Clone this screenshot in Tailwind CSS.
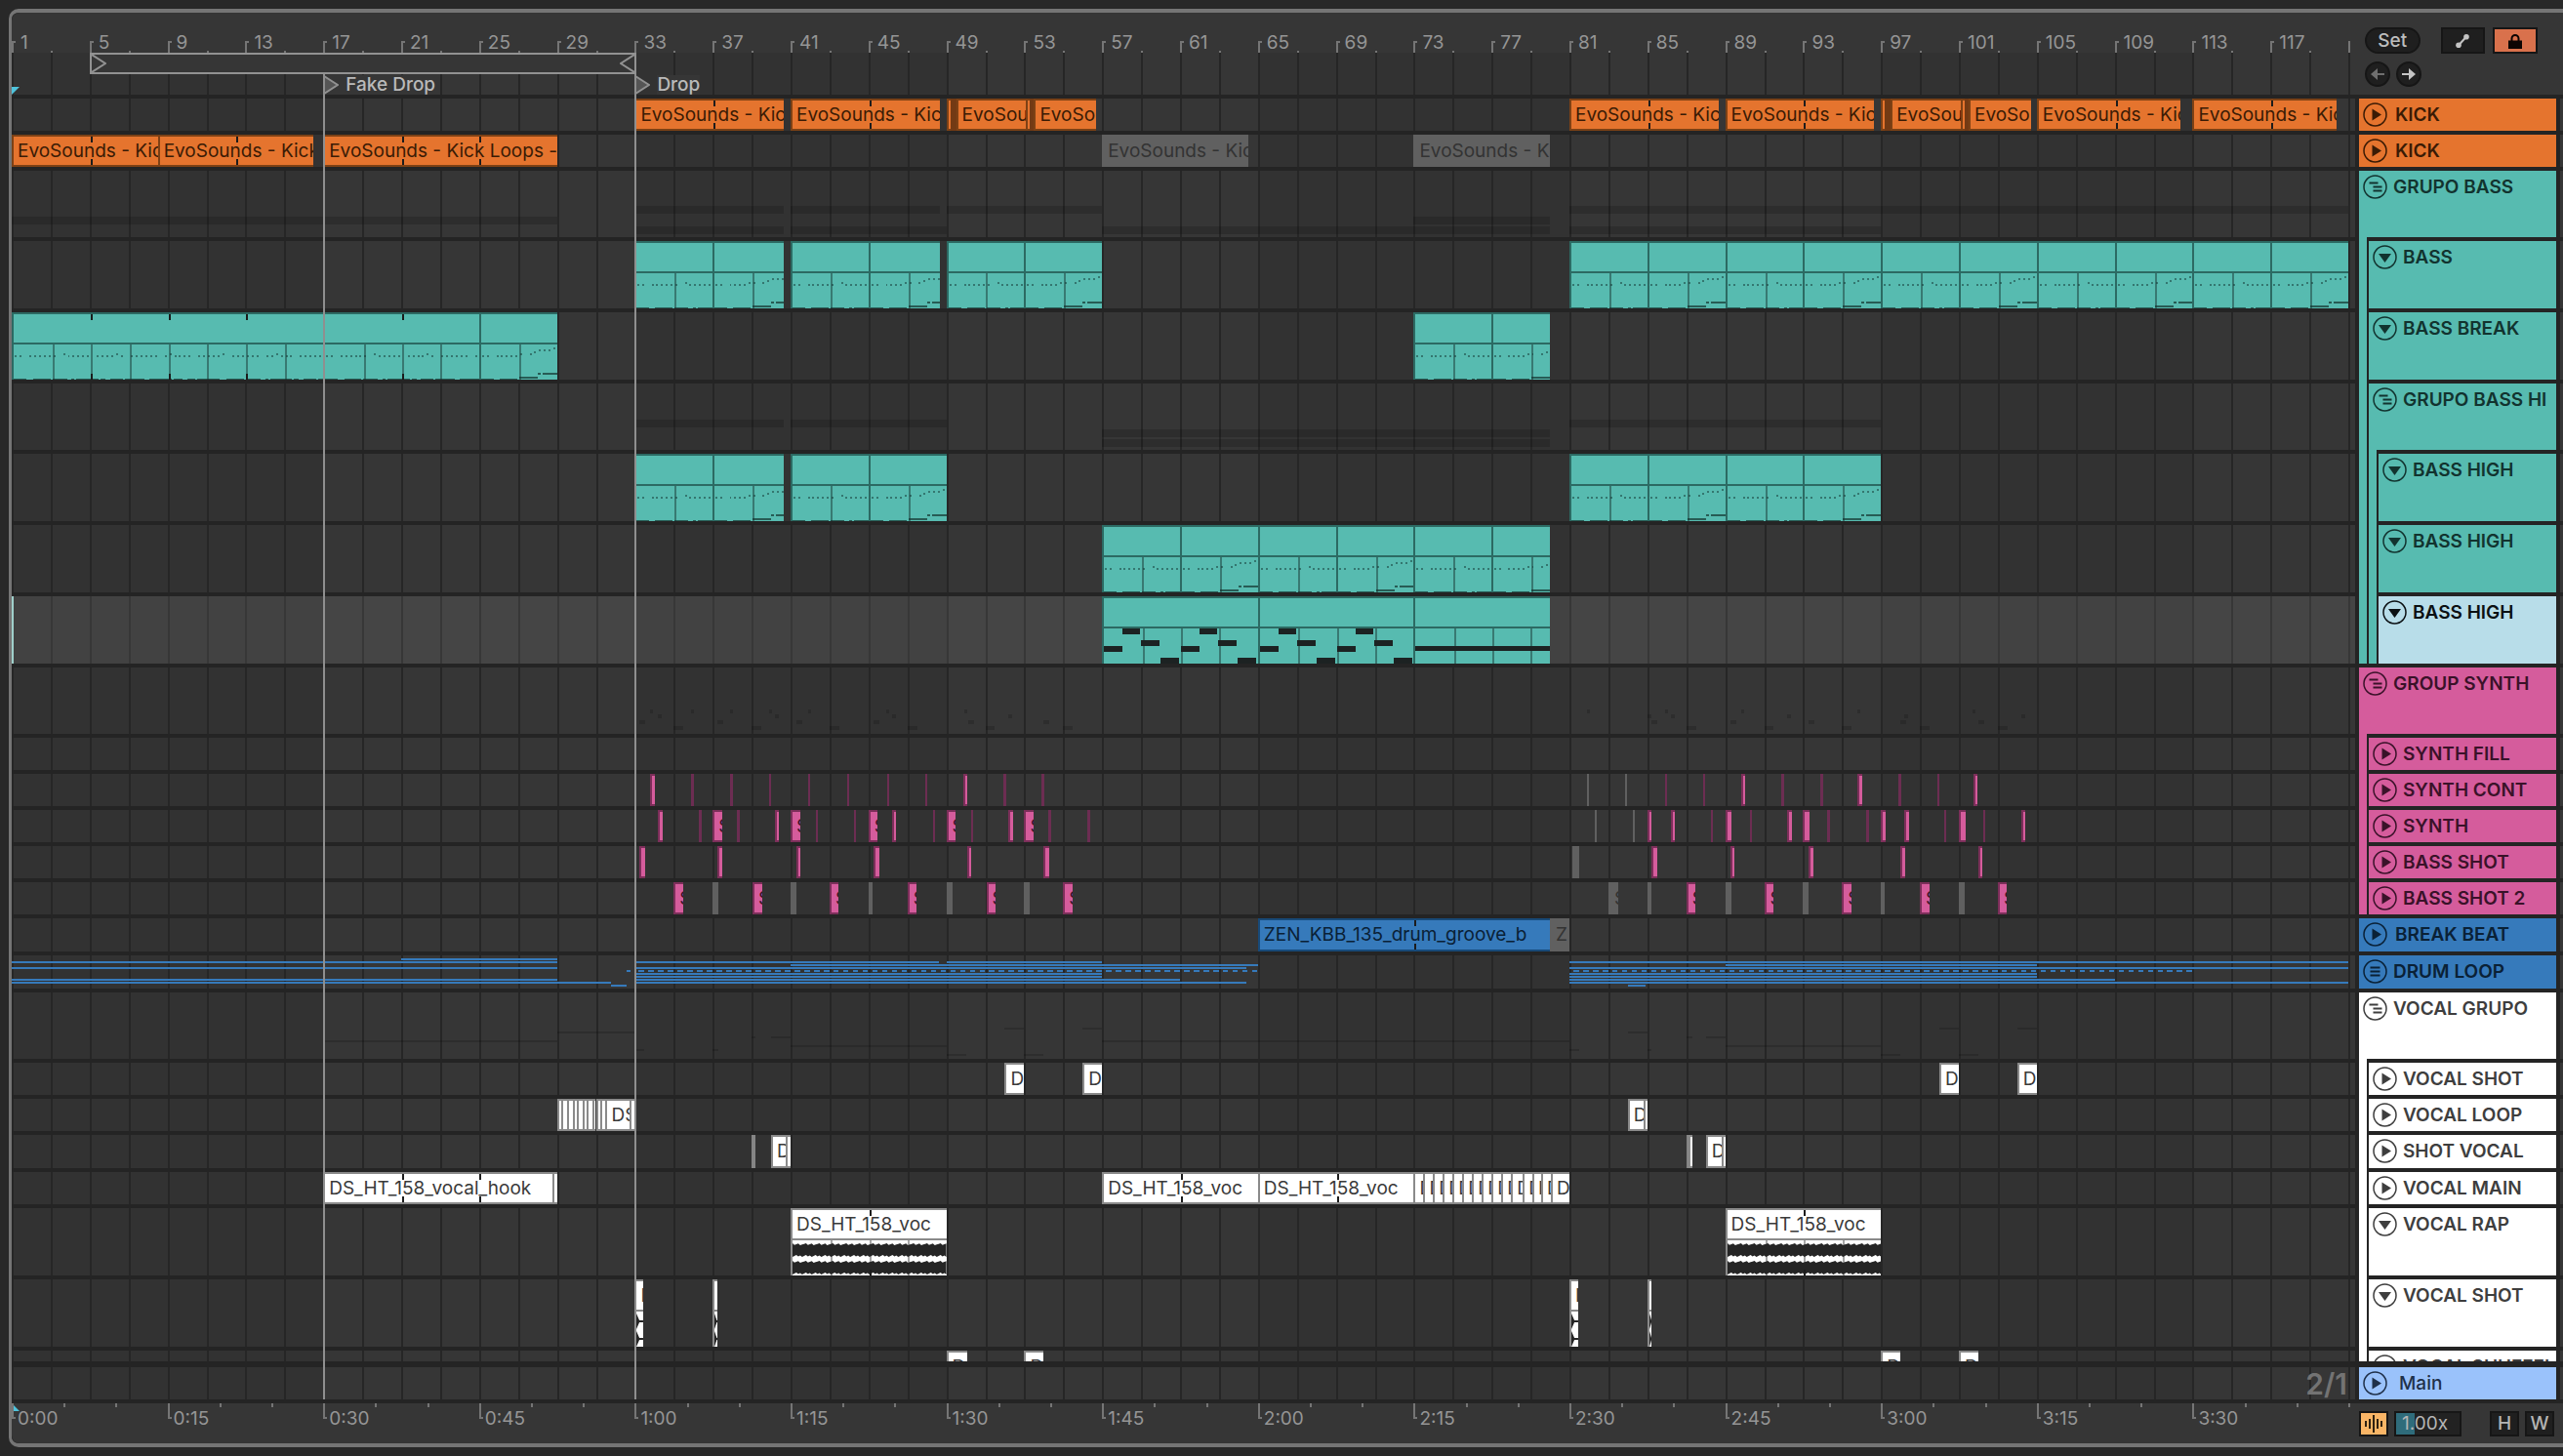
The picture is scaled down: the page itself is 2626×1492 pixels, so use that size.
<!DOCTYPE html>
<html lang="en">
 <head>
  <meta charset="utf-8"/>
  <title>Arrangement</title>
  <script src="https://cdn.jsdelivr.net/npm/@tailwindcss/browser@4"></script>
 </head>
 <body class="h-screen overflow-hidden bg-[#282828] py-[9px] pl-[9px] font-['Inter',sans-serif] text-[19px] leading-6">
  <main class="relative flex h-full flex-col rounded-l-[10px] border-y-4 border-l-[3px] border-[#757575] bg-[#242424]">

   <!-- bar grid behind everything -->
   <div class="absolute top-[41px] right-[213px] bottom-[45px] left-0 overflow-hidden bg-[#363636]" id="grid"></div>

   <header class="relative flex h-[84px] shrink-0">
    <div class="relative flex-1" id="ruler">
     <div class="absolute top-0 right-0 left-0 h-[41px] rounded-tl-lg bg-[#363636]"></div>
    </div>
    <div class="flex w-[213px] flex-col gap-2 bg-[#363636] pt-[15px] pl-[10px]">
     <div class="flex items-center pr-[26px]">
      <button class="h-[27px] w-[57px] rounded-full border-2 border-[#161616] bg-[#1f1f1f] leading-5 font-medium text-[#bdbdbd]">Set</button>
      <button aria-label="Automation mode" class="ml-[21px] flex h-[27px] w-[46px] items-center justify-center border-2 border-[#161616] bg-[#1f1f1f]">
       <svg class="size-4" viewBox="0 0 16 16"><path d="M4 12.500L12 3.500" stroke="#c4c4c4" stroke-width="2"/><circle cx="4" cy="12.300" fill="#c4c4c4" r="2.800"/><circle cx="12" cy="3.700" fill="#c4c4c4" r="2.800"/></svg>
      </button>
      <button aria-label="Lock envelopes" class="ml-2 flex h-[27px] w-[46px] items-center justify-center border-2 border-[#161616] bg-[#d9714c]">
       <svg class="size-4" viewBox="0 0 16 16"><path d="M4.500 8V5.500a3.500 3.500 0 0 1 7 0V8" fill="none" stroke="#0c0503" stroke-width="2"/><rect fill="#0c0503" height="8.500" width="14" x="1" y="7.500"/></svg>
      </button>
     </div>
     <div class="flex gap-[6px]">
      <button aria-label="Previous locator" class="flex size-[26px] items-center justify-center rounded-full border-2 border-[#161616] bg-[#1f1f1f]">
       <svg class="size-4" viewBox="0 0 16 16"><path d="M15 8H6" stroke="#6f6f6f" stroke-width="2"/><path d="M1 8L8 2v12z" fill="#6f6f6f"/></svg>
      </button>
      <button aria-label="Next locator" class="flex size-[26px] items-center justify-center rounded-full border-2 border-[#161616] bg-[#1f1f1f]">
       <svg class="size-4" viewBox="0 0 16 16"><path d="M1 8H10" stroke="#c4c4c4" stroke-width="2"/><path d="M15 8L8 2v12z" fill="#c4c4c4"/></svg>
      </button>
     </div>
    </div>
   </header>
   <div class="relative h-1 shrink-0 bg-[#242424]"></div>

   <section class="relative min-h-0 flex-1 overflow-hidden" id="tracks"></section>

   <div class="relative h-[6px] shrink-0 bg-[#242424]"></div>
   <div class="relative flex h-[33px] shrink-0">
    <div class="flex flex-1 items-center justify-end pr-2 text-3xl font-semibold text-[#737373]">2/1</div>
    <div class="w-1 bg-[#242424]"></div>
    <div class="flex w-[202px] items-center bg-[#9ac2fb] pl-1 text-[#1f3049]">
     <button aria-label="Play Main" class="size-[25px]">
      <svg class="size-full" fill="none" viewBox="0 0 25 25"><circle cx="12.500" cy="12.500" r="11.500" stroke="currentColor" stroke-width="1.500"/><path d="M9.500 6.500v12l9.500-6z" fill="currentColor"/></svg>
     </button>
     <span class="ml-3 font-medium">Main</span>
    </div>
    <div class="w-1 bg-[#242424]"></div>
    <div class="w-[3px] bg-[#363636]"></div>
   </div>
   <div class="relative h-1 shrink-0 bg-[#242424]"></div>

   <footer class="relative flex h-[41px] shrink-0 rounded-bl-lg bg-[#363636]">
    <div class="relative flex-1 overflow-hidden" id="timeline"></div>
    <div class="flex w-[213px] items-center pr-[9px] pl-1 text-[#b5b5b5]">
     <button aria-label="Follow" class="flex h-[26px] w-[30px] items-center justify-center border-2 border-[#161616] bg-[#f9b566]">
      <svg class="h-[18px] w-[20px]" viewBox="0 0 20 18"><path d="M2 6v6M6 4v10M10 0v18M14 4v10M18 6v6" stroke="#1a1208" stroke-width="1.800"/></svg>
     </button>
     <input aria-label="Zoom" class="ml-[6px] h-[26px] w-[69px] border-2 border-[#161616] bg-[linear-gradient(90deg,#2f6c7b_19px,#222222_19px)] pl-[6px] text-[#b5b5b5]" type="text" value="1.00x"/>
     <div class="flex flex-1 justify-end gap-[6px]">
      <button class="h-[26px] w-[30px] border-2 border-[#161616] bg-[#1f1f1f] leading-5 font-medium">H</button>
      <button class="h-[26px] w-[30px] border-2 border-[#161616] bg-[#1f1f1f] leading-5 font-medium">W</button>
     </div>
    </div>
   </footer>

   <!-- locator lines run over the clips -->
   <div class="pointer-events-none absolute top-[63px] right-[213px] bottom-[45px] left-0" id="locators"></div>
  </main>

  <script>
   const BARS = 120.35;
   const pct = bar => ((bar - 1) / BARS * 100) + '%';
   const len = bars => (bars / BARS * 100) + '%';

   const skins = {
     kick:  { head: 'bg-[#e5742e] text-[#3a1b05]', clip: 'bg-[#e5742e] border-[#7d4115] text-[#3a1b05]', solid: 'bg-[#733a14]' },
     teal:  { head: 'bg-[#57bbb0] text-[#12332f]', clip: 'bg-[#57bbb0] border-[#2c6a63] text-[#12332f]', solid: 'bg-[#2c6a63]' },
     sel:   { head: 'bg-[#b8dde9] text-[#0b1013]', clip: 'bg-[#57bbb0] border-[#2c6a63] text-[#12332f]', solid: 'bg-[#2c6a63]' },
     pink:  { head: 'bg-[#d55c9c] text-[#3a1229]', clip: 'bg-[#d55c9c] border-[#7c2f5a] text-[#3a1229]', solid: 'bg-[#6c2d52]' },
     blue:  { head: 'bg-[#367abb] text-[#0a2136]', clip: 'bg-[#367abb] border-[#174a79] text-[#0a2136]', solid: 'bg-[#174a79]' },
     white: { head: 'bg-white text-[#3e3e3e]', clip: 'bg-white border-[#8a8a8a] text-[#3a3a3a]', solid: 'bg-[#858585]' },
     off:   { clip: 'bg-[#606060] border-[#606060] text-[#333333]', solid: 'bg-[#606060]' }
   };

   const icons = {
     play: '<path d="M9.500 6.500v12l9.500-6z" fill="currentColor"/>',
     fold: '<path d="M6 9h13l-6.500 9z" fill="currentColor"/>',
     group: '<path d="M6.500 8.500h9M10.500 12.500h9M10.500 16.500h9" stroke="currentColor" stroke-width="2"/>',
     list: '<path d="M7.500 8.500h10M7.500 12.500h10M7.500 16.500h10" stroke="currentColor" stroke-width="2"/>'
   };

   const EVO = 'EvoSounds - Kic';
   const DS = 'DS_HT_158_voc';
   const ZEN = 'ZEN_KBB_135_drum_groove_b';

   // clip: [start bar, end bar, label, flag]   flags: off = muted, solid = sliver
   const slivers = (list, flag) => list.map(b => [b, b + 0.12, '', flag || 'solid']);
   const shorts = (list, w) => list.map(b => [b, b + w, '']);
   const named = list => list.map(b => [b, b + 0.48, 'S']);
   const fours = (a, b) => {
     const out = [];
     for (let s = a; s < b; s += 4) out.push([s, Math.min(s + 4, b), '']);
     return out;
   };

   const cuts = [29, 29.2, 29.5, 29.8, 30, 30.3, 30.5, 30.8, 31, 31.25, 31.5];
   const loopCuts = cuts.slice(0, -1).map((b, i) => [b, cuts[i + 1], '']);
   const mainCuts = [];
   for (let b = 73; b < 78; b += 0.5) mainCuts.push([b, b + 0.5, 'D']);

   const tracks = [
     { name: 'KICK', size: 's', skin: 'kick', icon: 'play', tick: 4, clips: [[33, 40.65, EVO], [41, 48.65, EVO], [49, 49.2, ''], [49.2, 49.5, '', 'solid'], [49.5, 53.1, 'EvoSou'], [53.1, 53.3, ''], [53.3, 53.5, '', 'solid'], [53.5, 56.7, 'EvoSo'], [81, 88.65, EVO], [89, 96.65, EVO], [97, 97.2, ''], [97.2, 97.5, '', 'solid'], [97.5, 101.1, 'EvoSou'], [101.1, 101.3, ''], [101.3, 101.5, '', 'solid'], [101.5, 104.7, 'EvoSo'], [105, 112.4, EVO], [113, 120.4, EVO]] },
     { name: 'KICK', size: 's', skin: 'kick', icon: 'play', tick: 4, clips: [[1, 8.5, EVO], [8.5, 16.5, 'EvoSounds - Kick'], [17, 29, 'EvoSounds - Kick Loops -'], [57, 64.5, EVO, 'off'], [73, 80, 'EvoSounds - K', 'off']] },
     { name: 'GRUPO BASS', size: 'g', skin: 'teal', icon: 'group', strips: [], shade: [[1, 29, 47, 8], [33, 40.65, 36, 8], [33, 40.65, 57, 8], [41, 48.65, 36, 8], [41, 49, 57, 8], [49, 57, 36, 8], [57, 80, 57, 8], [73, 80, 47, 8], [81, 121, 36, 8], [81, 97, 57, 8]] },
     { name: 'BASS', size: 'b', skin: 'teal', icon: 'fold', strips: ['teal'], notes: 1, clips: [...fours(33, 40.67), ...fours(41, 48.67), ...fours(49, 57), ...fours(81, 121)] },
     { name: 'BASS BREAK', size: 'b', skin: 'teal', icon: 'fold', strips: ['teal'], notes: 1, riseFrom: 27, tick: 4, clips: [[1, 17, ''], [17, 25, ''], [25, 29, ''], ...fours(73, 80)] },
     { name: 'GRUPO BASS HI', size: 'g', skin: 'teal', icon: 'group', strips: ['teal'], shade: [[33, 40.65, 37, 8], [41, 49, 37, 8], [57, 80, 47, 8], [57, 80, 57, 8], [81, 97, 37, 8]] },
     { name: 'BASS HIGH', size: 'b', skin: 'teal', icon: 'fold', strips: ['teal', 'teal'], notes: 1, clips: [...fours(33, 40.67), ...fours(41, 49), ...fours(81, 97)] },
     { name: 'BASS HIGH', size: 'b', skin: 'teal', icon: 'fold', strips: ['teal', 'teal'], notes: 1, clips: fours(57, 80) },
     { name: 'BASS HIGH', size: 'b', skin: 'sel', icon: 'fold', strips: ['teal', 'teal'], last: 1, notes: 2, clips: [[57, 65, ''], [65, 73, ''], [73, 80, '']] },
     { name: 'GROUP SYNTH', size: 'g', skin: 'pink', icon: 'group', shade: [
       ...[33.8, 35.9, 37.9, 39.9, 41.9, 45.9, 49.9, 81.9, 85.9, 89.8, 95.8, 101.7].map(b => [b, b + 0.15, 43, 4]),
       ...[34.2, 40.2, 46.2, 52.2, 85, 86.2, 92.2, 98.2, 104.2].map(b => [b, b + 0.2, 48, 4]),
       ...[33.25, 37.25, 41.3, 45.25, 50.1, 54, 85.2, 89.25, 93.3, 98, 102].map(b => [b, b + 0.3, 54, 4]),
       ...[35, 39, 43, 47, 51, 55, 87, 91, 95, 99, 103].map(b => [b, b + 0.5, 60, 4])] },
     { name: 'SYNTH FILL', size: 's', skin: 'pink', icon: 'play', strips: ['pink'], clips: [] },
     { name: 'SYNTH CONT', size: 's', skin: 'pink', icon: 'play', strips: ['pink'], clips: [...shorts([33.8, 49.85, 89.8, 95.8, 101.75], 0.22), ...slivers([35.9, 37.9, 39.9, 41.9, 43.9, 45.95, 47.9, 51.95, 53.9, 85.9, 87.85, 91.9, 93.9, 97.9, 99.9]), ...slivers([81.9, 83.85], 'off')] },
     { name: 'SYNTH', size: 's', skin: 'pink', icon: 'play', strips: ['pink'], clips: [...shorts([34.2, 40.2, 46.2, 52.2, 85, 86.2, 92.2, 97, 98.2, 104.2], 0.22), ...shorts([89, 93, 101], 0.33), ...named([37, 41, 45, 49, 53]), ...slivers([36.3, 38.25, 42.3, 44.25, 48.3, 50.25, 54.25, 56.25, 88.25, 90.25, 94.25, 96.25, 100.25, 102.25]), ...slivers([82.3, 84.25], 'off')] },
     { name: 'BASS SHOT', size: 's', skin: 'pink', icon: 'play', strips: ['pink'], clips: [...shorts([33.25, 45.25, 54, 85.2], 0.3), ...shorts([37.25, 41.3, 50.05, 89.25, 93.3, 98, 102], 0.22), [81.15, 81.5, '', 'off']] },
     { name: 'BASS SHOT 2', size: 's', skin: 'pink', icon: 'play', strips: ['pink'], last: 1, clips: [...named([35, 39.05, 43, 47, 51.05, 55, 87, 91, 95, 99, 103]), ...[37, 41, 49, 53, 89, 93, 101].map(b => [b, b + 0.3, '', 'off']), ...[45, 85, 97].map(b => [b, b + 0.2, '', 'off']), [83, 83.5, 'S', 'off']] },
     { name: 'BREAK BEAT', size: 'm', skin: 'blue', icon: 'play', tick: 8, clips: [[65, 80, ZEN], [80, 81, 'Z', 'off']] },
     { name: 'DRUM LOOP', size: 'm', skin: 'blue', icon: 'list', drums: 1 },
     { name: 'VOCAL GRUPO', size: 'g', skin: 'white', icon: 'group', shade: [[17, 29, 49, 2], [29, 33, 40, 2], [33, 33.5, 58, 2], [37, 37.3, 58, 2], [39, 39.2, 45, 2], [40, 41, 45, 2], [41, 49, 54, 2], [49, 50, 63, 2], [53, 54, 63, 2], [52, 53, 36, 2], [56, 57, 36, 2], [57, 81, 49, 2], [81, 81.5, 58, 2], [84, 85, 40, 2], [85, 85.2, 58, 2], [87, 87.3, 45, 2], [88, 89, 45, 2], [89, 97, 54, 2], [97, 98, 63, 2], [101, 102, 63, 2], [100, 101, 36, 2], [104, 105, 36, 2]] },
     { name: 'VOCAL SHOT', size: 's', skin: 'white', icon: 'play', strips: ['white'], clips: [[52, 53, 'D'], [56, 57, 'D'], [100, 101, 'D'], [104, 105, 'D']] },
     { name: 'VOCAL LOOP', size: 's', skin: 'white', icon: 'play', strips: ['white'], clips: [...loopCuts, [31.5, 32.75, 'DS'], [32.75, 33, ''], [84, 84.8, 'D'], [84.8, 85, '']] },
     { name: 'SHOT VOCAL', size: 'm', skin: 'white', icon: 'play', strips: ['white'], clips: [[39, 39.2, '', 'solid'], [40, 40.75, 'D'], [40.75, 41, ''], [87, 87.15, '', 'solid'], [87.1, 87.3, ''], [88, 88.8, 'D'], [88.8, 89, '']] },
     { name: 'VOCAL MAIN', size: 's', skin: 'white', icon: 'play', strips: ['white'], tick: 4, clips: [[17, 28.75, 'DS_HT_158_vocal_hook'], [28.75, 29, ''], [57, 65, DS], [65, 73, DS], ...mainCuts, [78, 78.6, 'D'], [78.6, 79.1, 'D'], [79.1, 79.55, 'D'], [79.55, 80.05, 'D'], [80.05, 81, 'D']] },
     { name: 'VOCAL RAP', size: 'b', skin: 'white', icon: 'fold', strips: ['white'], tick: 4, wave: 1, clips: [[41, 49, DS], [89, 97, DS]] },
     { name: 'VOCAL SHOT', size: 'b', skin: 'white', icon: 'fold', strips: ['white'], wave: 2, clips: [[33, 33.45, 'D'], [37, 37.25, ''], [81, 81.45, 'D'], [85, 85.2, '']] },
     { name: 'VOCAL SHUFFEL', size: 's', skin: 'white', icon: 'fold', strips: ['white'], clips: [[49, 50.05, 'D'], [53, 54, 'D'], [97, 98, 'D'], [101, 102, 'D']] }
   ];

   const heights = { s: 'h-[37px]', m: 'h-[38px]', g: 'h-[72px]', b: 'h-[73px]' };

   // little note marks: x is in twentieths of a bar, y in px below the clip header
   function noteMarks(start, end, riseFrom) {
     let out = '';
     for (let i = 0; i < (end - start) * 4; i++) {
       const bar = start + i / 4;
       const at = ((bar - 1) % 8 + 8) % 8;
       const rise = riseFrom && bar < 60 ? (bar >= riseFrom ? 6 + (bar - riseFrom) : 0) : at;
       const hi = rise >= 7.7 ? 3 : rise >= 7 ? 5 : rise >= 6.7 ? 7 : rise >= 5.7 ? 9 : (i * 7 % 11 === 4 ? 9 : 11);
       const lo = rise >= 7 ? 29 : rise >= 6 ? 33 : 35;
       if ((i * 5) % 7 !== 3) out += `<rect x="${i * 5 + 1}" y="${hi}" width="2" height="2" opacity=".5"/>`;
       if (rise >= 6 || (i * 3) % 8 !== 1) out += `<rect x="${i * 5}" y="${lo}" width="${i % 5 === 2 ? 3 : 5}" height="2" opacity=".7"/>`;
     }
     return out;
   }

   function blockMarks(start, end) {
     if (start === 73) return `<rect x="0" y="18" width="${(end - start) * 20}" height="5"/>`;
     let out = '';
     [0, 80].forEach(x => {
       [[0, 18], [20, 0], [40, 12], [60, 30]].forEach(([dx, y]) => {
         out += `<rect x="${x + dx - (dx ? 1 : 0)}" y="${y}" width="19" height="6"/>`;
       });
     });
     return out;
   }

   function waveMarks(start, end, kind) {
     const w = (end - start) * 20;
     let out = '';
     [10, 28].forEach(mid => {
       if (kind === 2) {
         out += `<path d="M0 ${mid - 8}L4 ${mid - 1}H${w}V${mid + 1}H4L0 ${mid + 8}z"/>`;
         return;
       }
       let top = '', bottom = '';
       for (let x = 0; x <= w; x += 2) {
         const j = (x * 13 % 7) / 3;
         top += `L${x} ${mid - 7 + j}`;
         bottom = `L${x} ${mid + 7 - (x * 11 % 5) / 2}` + bottom;
       }
       out += `<path d="M0 ${mid}${top}${bottom}z"/>`;
     });
     return out;
   }

   function clipHtml(t, [start, end, label, flag]) {
     const skin = skins[flag === 'off' ? 'off' : t.skin];
     const pos = `left:${pct(start)};width:${len(end - start)}`;
     if (flag === 'solid' || (flag === 'off' && !label)) {
       return `<div class="absolute inset-y-0 min-w-[2px] ${skin.solid}" style="${pos}"></div>`;
     }
     const span = end - start;
     let ticks = '', inner = '';
     if (t.tick && flag !== 'off') {
       for (let b = t.tick; b < span; b += t.tick) {
         const x = b / span * 100;
         ticks += `<i class="absolute top-0 h-[6px] w-[2px] bg-[#1c1c1c]" style="left:${x}%"></i><i class="absolute bottom-0 h-[6px] w-[2px] bg-[#1c1c1c]" style="left:${x}%"></i>`;
       }
     }
     const text = `<span class="block h-[29px] pl-1 leading-[30px]">${label}</span>`;
     if (t.size !== 'b') {
       return `<div class="absolute inset-y-0 overflow-hidden border-y-2 border-l-2 whitespace-nowrap ${skin.clip}" style="${pos}">${text}${ticks}</div>`;
     }
     for (let b = 2; b < span; b += 2) {
       inner += `<i class="absolute inset-y-0 w-[2px] bg-black/35" style="left:${b / span * 100}%"></i>`;
     }
     const marks = t.wave ? waveMarks(start, end, t.wave) : t.notes === 2 ? blockMarks(start, end) : noteMarks(start, end, t.riseFrom);
     const ink = t.notes === 1 ? '#12332f' : t.wave ? '#252525' : '#1c2222';
     return `<div class="absolute inset-y-0 overflow-hidden border-t-2 border-l-2 whitespace-nowrap ${skin.clip}" style="${pos}">${text}
       <div class="absolute top-[29px] right-0 bottom-0 left-0 border-t-2 border-inherit">${inner}
        <svg class="absolute inset-0 size-full" fill="${ink}" preserveAspectRatio="none" shape-rendering="${t.wave ? 'auto' : 'crispEdges'}" viewBox="0 0 ${span * 20} 36">${marks}</svg>
       </div>${ticks}</div>`;
   }

   function drumLines() {
     const rows = [
       [[21, 29]],
       [[1, 29], [33, 48.6], [49, 57], [81, 121]],
       [[41, 65], [89, 105]],
       [[1, 29], [33, 64.4], [81, 121]],
       [[32.6, 32.8]],
       [[33, 57], [81, 105]],
       [[33, 57], [81, 105]],
       [[1, 29], [33, 61], [81, 109]],
       [[1, 31.8], [33, 64.4], [81, 121]],
       [[31.8, 32.6], [84, 84.9]]
     ];
     for (let b = 33.2; b < 65; b += 0.5) rows[4].push([b, b + 0.28]);
     for (let b = 81.2; b < 113; b += 0.5) rows[4].push([b, b + 0.28]);
     return rows.map((segs, level) => segs.map(([a, b]) =>
       `<rect x="${(a - 1) * 20}" y="${level * 3 + 3}" width="${(b - a) * 20}" height="2"/>`).join('')).join('');
   }

   function laneHtml(t) {
     let html = '';
     if (t.skin === 'sel') html += '<div class="absolute inset-0 bg-white/8"></div><div class="absolute inset-y-0 left-0 w-[2px] bg-[#9fd0cb]"></div>';
     (t.shade || []).forEach(([a, b, y, h]) => {
       html += `<div class="absolute bg-black/15" style="left:${pct(a)};width:${len(b - a)};top:${y}px;height:${h}px"></div>`;
     });
     if (t.drums) html += `<svg class="absolute inset-0 size-full" fill="#367abb" preserveAspectRatio="none" shape-rendering="crispEdges" viewBox="0 0 ${BARS * 20} 34">${drumLines()}</svg>`;
     return html + (t.clips || []).map(c => clipHtml(t, c)).join('');
   }

   function headHtml(t) {
     const strips = (t.strips || []).map(s =>
       `<div class="w-[10px] shrink-0 border-r-2 border-[#242424] ${t.last ? 'border-b-4' : ''} ${skins[s].head}"></div>`).join('');
     const gap = t.icon === 'play' && !t.strips ? 'ml-2' : 'ml-[6px]';
     const foot = t.icon === 'group' ? 'ml-2' : '';
     return `<div class="flex w-[202px] overflow-hidden">${strips}
       <div class="flex min-w-0 flex-1 flex-col overflow-hidden ${skins[t.skin].head}">
        <div class="min-h-0 flex-1">
         <div class="flex h-[33px] items-center pl-1">
          <button aria-label="${t.name}" class="size-[25px] shrink-0"><svg class="size-full" fill="none" viewBox="0 0 25 25"><circle cx="12.500" cy="12.500" r="11.500" stroke="currentColor" stroke-width="1.500"/>${icons[t.icon]}</svg></button>
          <span class="${gap} min-w-0 flex-1 overflow-hidden font-semibold whitespace-nowrap">${t.name}</span>
         </div>
        </div>
        <div class="h-1 shrink-0 bg-[#242424] ${foot}"></div>
       </div>
      </div>`;
   }

   document.getElementById('tracks').innerHTML = tracks.map(t => `
     <div class="flex ${heights[t.size]}">
      <div class="relative flex-1 border-b-4 border-[#242424]">${laneHtml(t)}</div>
      <div class="w-1 bg-[#242424]"></div>
      ${headHtml(t)}
      <div class="w-1 bg-[#242424]"></div>
      <div class="w-[3px] border-b-4 border-[#242424] bg-[#363636]"></div>
     </div>`).join('');

   // grid: darker every other 16 bars, a line every 2
   let grid = '';
   for (let b = 1; b < 121; b += 32) grid += `<div class="absolute inset-y-0 bg-[#323232]" style="left:${pct(b)};width:${len(16)}"></div>`;
   for (let b = 1; b <= 121; b += 2) grid += `<div class="absolute inset-y-0 w-[2px] bg-[#262626]" style="left:${pct(b)}"></div>`;
   document.getElementById('grid').innerHTML = grid;

   let ruler = '';
   for (let b = 1; b <= 121; b += 2) {
     if (b % 4 === 1) {
       ruler += `<div class="absolute top-[29px] h-3 w-1 border-l-2 border-[#757575] ${b < 121 ? 'border-t-2' : ''}" style="left:${pct(b)}"></div>`;
       if (b < 121) ruler += `<span class="absolute top-[19px] pl-[9px] text-[#959595]" style="left:${pct(b)}">${b}</span>`;
     } else {
       ruler += `<div class="absolute top-[39px] h-[2px] w-[2px] bg-[#757575]" style="left:${pct(b)}"></div>`;
     }
   }
   ruler += `<div class="absolute top-[41px] h-[22px] border-2 border-[#929292] bg-[#363636]" style="left:${pct(5)};width:${len(28.1)}">
      <svg class="absolute top-0 left-0 h-[18px] w-[15px]" viewBox="0 0 15 18"><path d="M0 0L14 9L0 18" fill="none" stroke="#929292" stroke-width="2"/></svg>
      <svg class="absolute top-0 right-0 h-[18px] w-[15px]" viewBox="0 0 15 18"><path d="M15 0L1 9L15 18" fill="none" stroke="#929292" stroke-width="2"/></svg>
     </div>`;
   [[17, 'Fake Drop'], [33, 'Drop']].forEach(([b, name]) => {
     ruler += `<div class="absolute top-[63px] flex h-[21px] items-center" style="left:${pct(b)}">
       <svg class="h-5 w-4" viewBox="0 0 16 20"><path d="M1 1L15 10L1 19z" fill="#555" stroke="#929292" stroke-width="2"/></svg>
       <span class="ml-[7px] bg-[#363636] leading-5 font-medium text-[#bababa]">${name}</span>
      </div>`;
   });
   ruler += '<svg class="absolute top-[76px] left-0 size-2" viewBox="0 0 8 8"><path d="M0 0H8L0 8z" fill="#4fc3dc"/></svg>';
   document.getElementById('ruler').insertAdjacentHTML('beforeend', ruler);

   document.getElementById('locators').innerHTML = [17, 33].map(b =>
     `<div class="absolute inset-y-0 w-[2px] bg-[#8f8f8f]" style="left:${pct(b)}"></div>`).join('');

   // 8 bars last 15 seconds
   let timeline = '<svg class="absolute top-0 left-0 size-2" viewBox="0 0 8 8"><path d="M0 0L8 8H0z" fill="#4fc3dc"/></svg>';
   for (let s = 0; s <= 225; s += 5) {
     const left = pct(1 + s * 8 / 15);
     if (s % 15 === 0 && s < 225) {
       const label = Math.floor(s / 60) + ':' + String(s % 60).padStart(2, '0');
       timeline += `<div class="absolute top-0 h-4 w-1 border-b-2 border-l-2 border-[#757575]" style="left:${left}"></div>
         <span class="absolute top-1 pl-[6px] text-[#959595]" style="left:${left}">${label}</span>`;
     } else {
       timeline += `<div class="absolute top-0 h-1 w-[2px] bg-[#757575]" style="left:${left}"></div>`;
     }
   }
   document.getElementById('timeline').innerHTML = timeline;
  </script>
 </body>
</html>
